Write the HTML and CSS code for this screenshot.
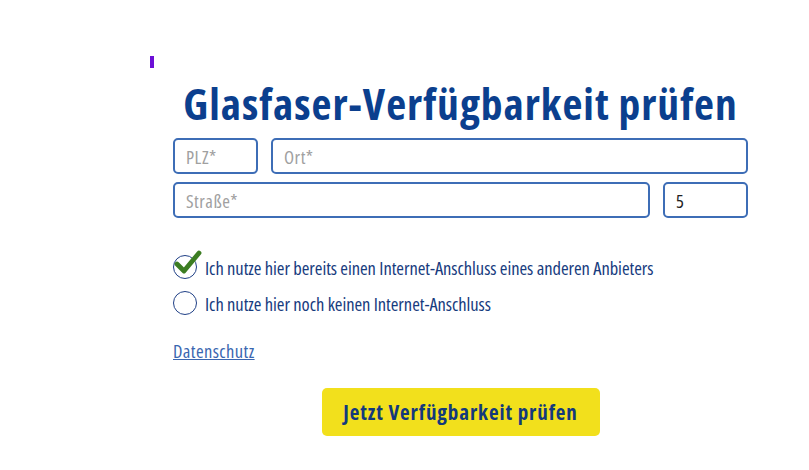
FILE: index.html
```html
<!DOCTYPE html>
<html lang="de">
<head>
<meta charset="utf-8">
<title>Glasfaser-Verfügbarkeit prüfen</title>
<link rel="stylesheet" href="styles.css">
</head>
<body>
<div class="page">
  <div class="marker"></div>
  <form class="form">
    <h1 class="title">Glasfaser-Verfügbarkeit prüfen</h1>
    <div class="row row-first">
      <input class="field field-plz" type="text" placeholder="PLZ*">
      <input class="field field-grow" type="text" placeholder="Ort*">
    </div>
    <div class="row">
      <input class="field field-grow" type="text" placeholder="Straße*">
      <input class="field field-nr" type="text" value="5">
    </div>
    <div class="options">
      <label class="option">
        <span class="radio">
          <svg class="check" width="28" height="26" viewBox="0 0 28 26"><path d="M3 14 L10 21 L25 3" fill="none" stroke="#3c7d22" stroke-width="4.8" stroke-linecap="round" stroke-linejoin="round"/></svg>
        </span>
        <span class="option-text">Ich nutze hier bereits einen Internet-Anschluss eines anderen Anbieters</span>
      </label>
      <label class="option">
        <span class="radio"></span>
        <span class="option-text">Ich nutze hier noch keinen Internet-Anschluss</span>
      </label>
    </div>
    <a class="privacy" href="#">Datenschutz</a>
    <div class="actions">
      <button class="submit" type="button">Jetzt Verfügbarkeit prüfen</button>
    </div>
  </form>
</div>
</body>
</html>
```

FILE: styles.css
```css
html, body {
  margin: 0;
  padding: 0;
  background: #ffffff;
}

body {
  font-family: "Open Sans", "DejaVu Sans Condensed", sans-serif;
  font-stretch: 75%;
  color: #14397a;
}

.page {
  padding: 56px 0 0 150px;
}

.marker {
  width: 4px;
  height: 12px;
  background: #6c0fd6;
}

.form {
  width: 575px;
  margin-left: 23px;
}

.title {
  margin: 9px 0 0;
  text-align: center;
  font-size: 43.5px;
  line-height: 54px;
  font-weight: 700;
  letter-spacing: 1px;
  color: #0b3f8e;
  white-space: nowrap;
}

.row {
  display: flex;
  gap: 13px;
  margin-top: 8px;
}

.row-first {
  margin-top: 7px;
}

.field {
  box-sizing: border-box;
  height: 36px;
  border: 2px solid #3d6db6;
  border-radius: 5px;
  padding: 0 11px;
  font-family: inherit;
  font-stretch: inherit;
  font-size: 18.5px;
  letter-spacing: 0.5px;
  color: #222;
  background: #fff;
  outline: none;
  min-width: 0;
}

.field::placeholder {
  color: #a0a0a0;
}

.field-plz {
  width: 85px;
  flex: none;
}

.field-nr {
  width: 85px;
  flex: none;
}

.field-grow {
  flex: 1;
}

.options {
  margin-top: 37px;
  display: flex;
  flex-direction: column;
  gap: 12px;
}

.option {
  display: flex;
  align-items: center;
  gap: 8px;
  height: 24px;
}

.radio {
  position: relative;
  box-sizing: border-box;
  width: 24px;
  height: 24px;
  border: 1.5px solid #1f3f86;
  border-radius: 50%;
  flex: none;
}

.check {
  position: absolute;
  left: 0px;
  top: -6px;
}

.option-text {
  font-size: 18.5px;
  letter-spacing: -0.05px;
  color: #173b7e;
  white-space: nowrap;
}

.privacy {
  display: inline-block;
  margin-top: 23px;
  font-size: 18.5px;
  letter-spacing: 0.4px;
  color: #3a66b0;
  text-decoration: underline;
}

.actions {
  display: flex;
  justify-content: center;
  margin-top: 25px;
}

.submit {
  width: 278px;
  height: 48px;
  border: none;
  border-radius: 5px;
  background: #f2e01c;
  font-family: inherit;
  font-stretch: inherit;
  font-size: 21px;
  letter-spacing: 0.9px;
  font-weight: 700;
  color: #13397c;
  white-space: nowrap;
  cursor: pointer;
}
```
